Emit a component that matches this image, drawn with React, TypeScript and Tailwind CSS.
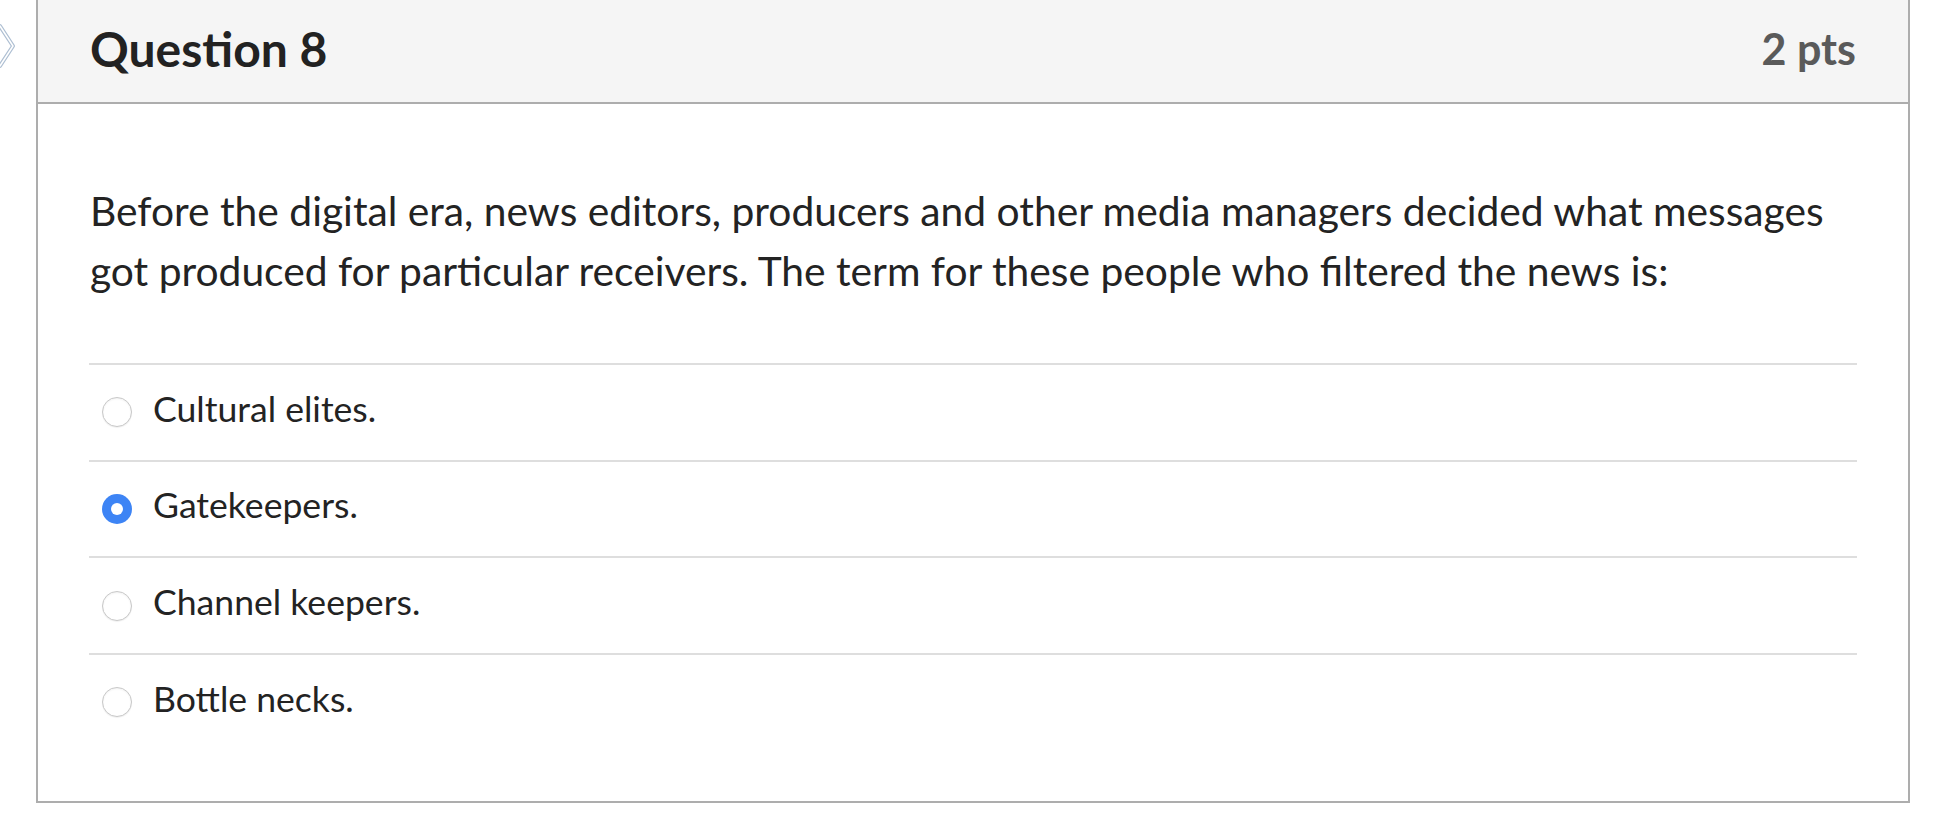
const answers = [
  { label: "Cultural elites.", selected: false },
  { label: "Gatekeepers.", selected: true },
  { label: "Channel keepers.", selected: false },
  { label: "Bottle necks.", selected: false },
];

function Radio({ checked }: { checked: boolean }) {
  if (checked) {
    return (
      <span className="flex h-[30px] w-[30px] shrink-0 items-center justify-center rounded-full bg-[#3d84f5]">
        <span className="h-[12px] w-[12px] rounded-full bg-white" />
      </span>
    );
  }
  return (
    <span className="h-[30px] w-[30px] shrink-0 rounded-full border border-[#c8c8c8] bg-white shadow-[inset_0_1px_2px_rgba(0,0,0,0.06),0_1px_1px_rgba(0,0,0,0.06)]" />
  );
}

export default function App() {
  return (
    <div
      className="relative h-[824px] w-full overflow-hidden bg-white text-[#232323]"
      style={{ fontFamily: "Lato, 'Open Sans', sans-serif" }}
    >
      {/* flag tip peeking out on the left */}
      <svg className="absolute left-0 top-[24px]" width="16" height="44" viewBox="0 0 16 44">
        <path d="M-6 2 L0 2 L13 22 L0 42 L-6 42" fill="none" stroke="#aebfd2" strokeWidth="4" strokeLinejoin="round" />
        <path d="M-6 2 L0 2 L13 22 L0 42 L-6 42" fill="none" stroke="#ffffff" strokeWidth="1.5" strokeLinejoin="round" />
      </svg>

      <div className="ml-[36px] w-[1874px] border-2 border-t-0 border-[#adadad]">
        <div className="flex h-[104px] items-center justify-between border-b-2 border-[#adadad] bg-[#f5f5f5] px-[52px] pb-[5px]">
          <h2 className="text-[48px] font-bold leading-none text-[#222]">Question 8</h2>
          <span className="text-[43px] font-bold leading-none text-[#5a5a5a]">2 pts</span>
        </div>

        <div className="px-[51px] pb-[51px] pt-[77px]">
          <p className="whitespace-nowrap pl-px text-[40.75px] leading-[60px]">
            Before the digital era, news editors, producers and other media managers decided what messages
            <br />
            got produced for particular receivers. The term for these people who filtered the news is:
          </p>

          <div className="mt-[62px]">
            {answers.map((a) => (
              <div key={a.label} className="flex h-[96.7px] items-center border-t-2 border-[#dedede] pl-[13px]">
                <Radio checked={a.selected} />
                <span className="ml-[21px] pb-[8px] text-[35.6px] leading-none">{a.label}</span>
              </div>
            ))}
          </div>
        </div>
      </div>
    </div>
  );
}
